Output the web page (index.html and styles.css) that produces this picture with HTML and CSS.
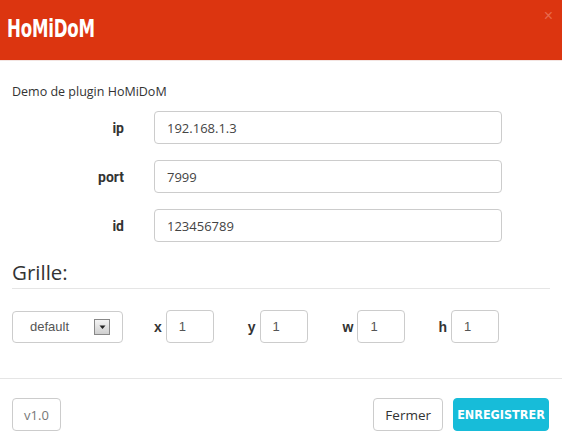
FILE: index.html
```html
<!DOCTYPE html>
<html>
<head>
<meta charset="utf-8">
<link rel="stylesheet" href="styles.css">
</head>
<body>
<div class="modal">
  <div class="modal-header">
    <h1 class="title">HoMiDoM</h1>
    <span class="close">×</span>
  </div>
  <div class="modal-body">
    <p class="desc">Demo de plugin HoMiDoM</p>
    <div class="form">
      <label class="lbl">ip</label><div class="inp">192.168.1.3</div>
      <label class="lbl">port</label><div class="inp">7999</div>
      <label class="lbl">id</label><div class="inp">123456789</div>
    </div>
    <h2 class="section">Grille:</h2>
    <div class="grid-row">
      <div class="select"><span>default</span><span class="arrow"><svg width="9" height="6" viewBox="0 0 9 6"><path d="M1.5 1.5h6L4.5 5z" fill="#222"/></svg></span></div>
      <div class="pair lx"><b class="sl">x</b><div class="small">1</div></div>
      <div class="pair ly"><b class="sl">y</b><div class="small">1</div></div>
      <div class="pair lw"><b class="sl">w</b><div class="small">1</div></div>
      <div class="pair lh"><b class="sl">h</b><div class="small">1</div></div>
    </div>
  </div>
  <div class="modal-footer">
    <div class="btn ver">v1.0</div>
    <div class="right">
      <div class="btn fermer">Fermer</div>
      <div class="btn primary">ENREGISTRER</div>
    </div>
  </div>
</div>
</body>
</html>
```
FILE: styles.css
```css
* { box-sizing: border-box; }
html, body { margin: 0; padding: 0; background: #fff; }
body { width: 562px; height: 445px; overflow: hidden; font-family: "Open Sans", sans-serif; color: #333; }
.modal-header { height: 61px; background: #dc3510; display: flex; align-items: center; justify-content: space-between; padding: 0 9px 0 7px; border-bottom: 1px solid #f3e5e2; }
.title { margin: 0; font-family: "DejaVu Sans Condensed", sans-serif; font-weight: bold; font-size: 24px; color: #fff; padding-bottom: 2px; transform: scaleX(0.77); transform-origin: left center; letter-spacing: -0.3px; }
.close { align-self: flex-start; margin-top: 7px; color: #e86a4d; font-size: 16px; font-family: "Liberation Sans", sans-serif; }
.modal-body { padding: 22px 12px 0 12px; }
.desc { margin: 0; font-size: 12.5px; line-height: 18px; color: #333; }
.form { display: grid; grid-template-columns: 112px 348px; column-gap: 30px; row-gap: 16px; margin-top: 10px; align-items: center; }
.lbl { text-align: right; font-family: Roboto, sans-serif; font-weight: bold; font-size: 14px; color: #333; }
.inp { height: 33px; border: 1px solid #ccc; border-radius: 4px; padding: 0 12px; display: flex; align-items: center; font-size: 13px; color: #444; }
.section { margin: 17px 0 0 0; font-weight: normal; font-size: 20.5px; line-height: 26px; color: #333; padding-bottom: 3px; border-bottom: 1px solid #e5e5e5; width: 538px; }
.grid-row { display: flex; align-items: center; margin-top: 21px; }
.select { width: 111px; height: 32px; border: 1px solid #ccc; border-radius: 4px; display: flex; align-items: center; justify-content: space-between; padding: 0 12px 0 17px; font-family: "Liberation Sans", sans-serif; font-size: 13px; color: #555; }
.arrow { width: 16px; height: 16px; border: 1px solid #888; background: linear-gradient(#f4f4f4, #cfcfcf); display: flex; align-items: center; justify-content: center; }
.pair { display: flex; align-items: center; }
.sl { font-family: "Liberation Sans", sans-serif; font-weight: bold; font-size: 14px; color: #333; margin-right: 4px; }
.lx { margin-left: 31px; }
.ly { margin-left: 34px; }
.lw { margin-left: 35px; }
.lh { margin-left: 33px; }
.small { width: 48px; height: 33px; border: 1px solid #ccc; border-radius: 4px; display: flex; align-items: center; padding-left: 12px; font-family: "Liberation Sans", sans-serif; font-size: 13px; color: #555; }
.modal-footer { margin-top: 35px; border-top: 1px solid #e5e5e5; padding: 19px 13px 0 12px; display: flex; justify-content: space-between; }
.right { display: flex; gap: 10px; }
.btn { height: 33px; border: 1px solid #ccc; border-radius: 4px; display: flex; align-items: center; justify-content: center; padding: 0 12px; font-size: 13.5px; color: #333; background: #fff; }
.fermer { padding: 0 11px; }
.ver { width: 49px; padding: 0; color: #777; font-size: 13px; }
.primary { background: #17bcd9; border-color: #17bcd9; color: #fff; font-family: "DejaVu Sans Condensed", sans-serif; font-weight: bold; font-size: 12.5px; width: 96px; padding: 0; }
```
